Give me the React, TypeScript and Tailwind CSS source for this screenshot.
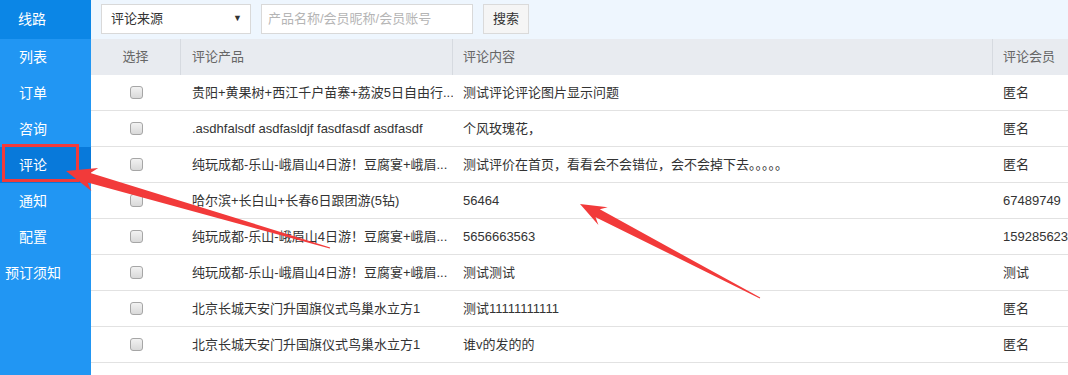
import React from "react";

type P = { x: number; y: number };

function arrowPoints(tip: P, tail: P, headLen: number, headHalf: number, shaftHalf: number, tailHalf: number) {
  const dx = tail.x - tip.x;
  const dy = tail.y - tip.y;
  const len = Math.hypot(dx, dy);
  const ux = dx / len;
  const uy = dy / len;
  const nx = -uy;
  const ny = ux;
  const bx = tip.x + ux * headLen;
  const by = tip.y + uy * headLen;
  const bx2 = tip.x + ux * (headLen - 6);
  const by2 = tip.y + uy * (headLen - 6);
  const pts: [number, number][] = [
    [tip.x, tip.y],
    [bx + nx * headHalf, by + ny * headHalf],
    [bx2 + nx * shaftHalf, by2 + ny * shaftHalf],
    [tail.x + nx * tailHalf, tail.y + ny * tailHalf],
    [tail.x - nx * tailHalf, tail.y - ny * tailHalf],
    [bx2 - nx * shaftHalf, by2 - ny * shaftHalf],
    [bx - nx * headHalf, by - ny * headHalf],
  ];
  return pts.map((p) => p.map((v) => v.toFixed(1)).join(",")).join(" ");
}

const navItems = ["列表", "订单", "咨询", "评论", "通知", "配置", "预订须知"];

const rows = [
  ["贵阳+黄果树+西江千户苗寨+荔波5日自由行...", "测试评论评论图片显示问题", "匿名"],
  [".asdhfalsdf asdfasldjf fasdfasdf asdfasdf", "个风玫瑰花，", "匿名"],
  ["纯玩成都-乐山-峨眉山4日游！豆腐宴+峨眉...", "测试评价在首页，看看会不会错位，会不会掉下去。。。。。", "匿名"],
  ["哈尔滨+长白山+长春6日跟团游(5钻)", "56464", "67489749"],
  ["纯玩成都-乐山-峨眉山4日游！豆腐宴+峨眉...", "5656663563", "15928562301"],
  ["纯玩成都-乐山-峨眉山4日游！豆腐宴+峨眉...", "测试测试", "测试"],
  ["北京长城天安门升国旗仪式鸟巢水立方1", "测试11111111111", "匿名"],
  ["北京长城天安门升国旗仪式鸟巢水立方1", "谁v的发的的", "匿名"],
];

const font = { fontFamily: '"Liberation Sans", "Noto Sans CJK SC", sans-serif' };

export default function App() {
  return (
    <div
      className="relative flex w-[1068px] h-[375px] overflow-hidden bg-white text-[13px] text-[#333]"
      style={font}
    >
      {/* Sidebar */}
      <div className="flex w-[91px] shrink-0 flex-col bg-[#2196f3] text-[14px] text-white">
        <div className="flex h-[39px] items-center bg-[#0b86e6]">
          <span className="w-[64px] text-center">线路</span>
        </div>
        {navItems.map((n) => (
          <div
            key={n}
            className={`flex h-[36px] items-center ${n === "评论" ? "bg-[#0879da]" : ""}`}
          >
            <span className="w-[66px] text-center whitespace-nowrap">{n}</span>
          </div>
        ))}
      </div>

      {/* Main */}
      <div className="flex min-w-0 flex-1 flex-col">
        <div className="flex h-[39px] items-start bg-[#eef6fe] pl-[10px] pt-[4px]">
          <div className="flex h-[30px] w-[150px] items-center justify-between border border-[#d9d9d9] bg-white pl-[9px] pr-[8px]">
            <span>评论来源</span>
            <span className="text-[9px] text-[#333]">▼</span>
          </div>
          <div className="ml-[10px] flex h-[30px] w-[212px] items-center border border-[#d9d9d9] bg-white pl-[6px] text-[#b5b5b5]">
            产品名称/会员昵称/会员账号
          </div>
          <div className="ml-[10px] flex h-[30px] w-[46px] items-center justify-center border border-[#dadada] bg-[#f5f5f5]">
            搜索
          </div>
        </div>

        <div className="w-[1100px]">
          <div className="grid h-[36px] grid-cols-[90px_272px_540px_198px] bg-[#e8ebf0] text-[#666]">
            <div className="flex items-center justify-center border-r border-[#d6dae0]">选择</div>
            <div className="flex items-center border-r border-[#d6dae0] pl-[11px]">评论产品</div>
            <div className="flex items-center border-r border-[#d6dae0] pl-[10px]">评论内容</div>
            <div className="flex items-center pl-[10px]">评论会员</div>
          </div>
          {rows.map((r, i) => (
            <div
              key={i}
              className="grid h-[36px] grid-cols-[90px_272px_540px_198px] border-b border-[#e2e2e2]"
            >
              <div className="flex items-center justify-center">
                <div className="h-[13px] w-[13px] rounded-[3px] border border-[#a6a6a6] bg-gradient-to-b from-[#f2f2f2] to-[#d9d9d9]" />
              </div>
              <div className="flex items-center overflow-hidden whitespace-nowrap pl-[11px]">{r[0]}</div>
              <div className="flex items-center overflow-hidden whitespace-nowrap pl-[10px]">{r[1]}</div>
              <div className="flex items-center overflow-hidden whitespace-nowrap pl-[10px]">{r[2]}</div>
            </div>
          ))}
        </div>
      </div>

      {/* Annotations */}
      <div className="absolute left-[2px] top-[144px] h-[38px] w-[77px] border-[3px] border-[#f23a3a]" />
      <svg className="pointer-events-none absolute left-0 top-0" width="1068" height="375">
        <polygon
          fill="#f23a3a"
          points={arrowPoints({ x: 66, y: 171 }, { x: 330, y: 248 }, 30, 12, 5, 0.6)}
        />
        <polygon
          fill="#f23a3a"
          points={arrowPoints({ x: 580, y: 204 }, { x: 760, y: 298 }, 26, 10, 4.5, 0.5)}
        />
      </svg>
    </div>
  );
}
